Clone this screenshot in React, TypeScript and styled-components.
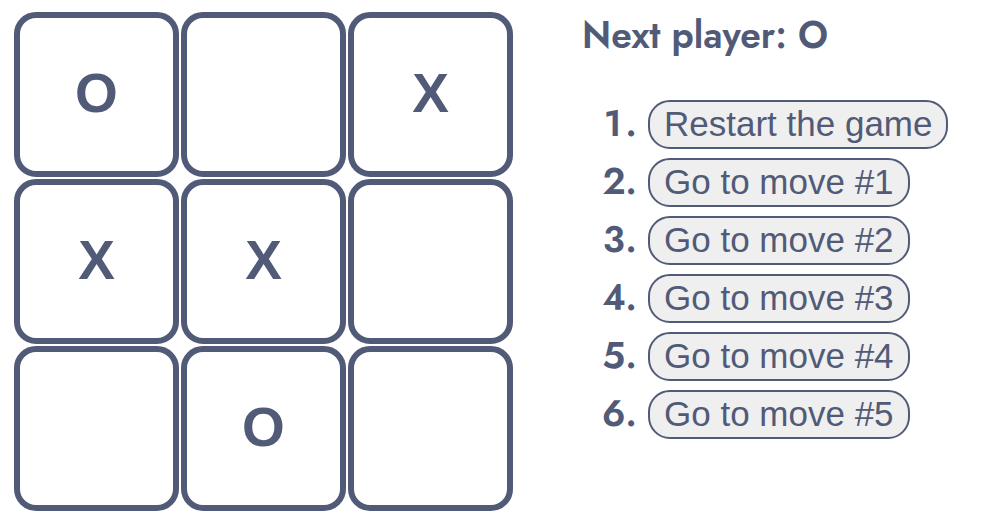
import React from "react";
import styled, { createGlobalStyle } from "styled-components";

const ink = "#515b78";

const GlobalStyle = createGlobalStyle`
  * { box-sizing: border-box; }
  body {
    margin: 0;
    background: #fff;
    color: ${ink};
    font-family: Futura, Jost, Lato, sans-serif;
  }
`;

const Game = styled.main`
  display: flex;
  align-items: flex-start;
  gap: 69px;
  padding: 12px 14px;
`;

const Board = styled.div`
  display: grid;
  grid-template-columns: repeat(3, auto);
  gap: 2px;
`;

const Square = styled.button`
  width: 165px;
  height: 165px;
  padding: 0 0 3px;
  border: 6px solid ${ink};
  border-radius: 22px;
  background: #fff;
  color: ${ink};
  font: bold 55px "Liberation Sans", Arial, sans-serif;
  cursor: pointer;
`;

const Info = styled.section`
  flex: 1;
`;

const Status = styled.h1`
  margin: 0;
  font-size: 37px;
  font-weight: 600;
  line-height: 46px;
`;

const Moves = styled.ol`
  display: grid;
  gap: 9px;
  margin: 41px 0 0;
  padding: 0 0 0 66px;
  font-size: 37px;
  font-weight: 600;
  line-height: 48px;
`;

const Move = styled.li`
  height: 49px;
`;

const MoveButton = styled.button`
  display: block;
  height: 49px;
  padding: 0 14px 1px;
  border: 2px solid ${ink};
  border-radius: 22px;
  background: #efefef;
  color: ${ink};
  font: 35px "Liberation Sans", Arial, sans-serif;
  white-space: nowrap;
  cursor: pointer;
`;

const squares = ["O", "", "X", "X", "X", "", "", "O", ""];
const moves = [
  "Restart the game",
  "Go to move #1",
  "Go to move #2",
  "Go to move #3",
  "Go to move #4",
  "Go to move #5",
];

export default function App() {
  return (
    <>
      <GlobalStyle />
      <Game>
        <Board>
          {squares.map((value, i) => (
            <Square key={i} type="button" aria-label={value ? undefined : `Empty square ${i + 1}`}>
              {value}
            </Square>
          ))}
        </Board>
        <Info>
          <Status>Next player: O</Status>
          <Moves>
            {moves.map((label) => (
              <Move key={label}>
                <MoveButton type="button">{label}</MoveButton>
              </Move>
            ))}
          </Moves>
        </Info>
      </Game>
    </>
  );
}
